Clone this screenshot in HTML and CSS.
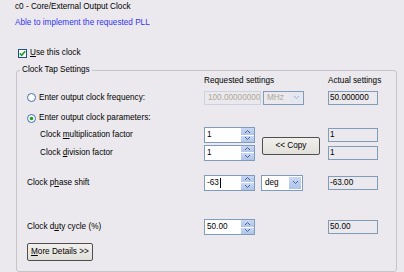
FILE: index.html
```html
<!DOCTYPE html>
<html lang="en">
<head>
    <meta charset="UTF-8">
    <title>Output Clock</title>
    <link rel="stylesheet" href="styles.css">
</head>
<body>
    <!-- Cabecera -->
    <div class="head">
        <p class="title">c0 - Core/External Output Clock</p>
        <p class="status">Able to implement the requested PLL</p>
        <div class="check">
            <svg width="9" height="9" viewBox="0 0 9 9"><rect x="0.5" y="0.5" width="8" height="8" fill="#fff" stroke="#1c5180"/><path d="M1.8 4.3 L3.7 6.3 L7.2 2.2" fill="none" stroke="#21a121" stroke-width="1.7"/></svg>
            <span><u>U</u>se this clock</span>
        </div>
    </div>

    <!-- Clock tap settings -->
    <fieldset class="tap">
        <legend>Clock Tap Settings</legend>
        <div class="grid">
            <span></span>
            <span class="colhead req">Requested settings</span>
            <span class="colhead">Actual settings</span>

            <div class="radio">
                <svg width="9" height="9" viewBox="0 0 9 9"><circle cx="4.5" cy="4.5" r="4" fill="#fff" stroke="#3c6fb0"/></svg>
                <span>Enter output clock frequency:</span>
            </div>
            <div class="freq">
                <span class="field disabled">100.00000000</span>
                <span class="combo small disabled">MHz<span class="drop"><svg width="7" height="5" viewBox="0 0 7 5"><path d="M1 1 L3.5 3.5 L6 1" fill="none" stroke="#a3afc4"/></svg></span></span>
            </div>
            <span class="actual">50.000000</span>

            <div class="radio span-row">
                <svg width="9" height="9" viewBox="0 0 9 9"><circle cx="4.5" cy="4.5" r="4" fill="#fff" stroke="#3c6fb0"/><circle cx="4.5" cy="4.5" r="1.8" fill="#21a121"/></svg>
                <span>Enter output clock parameters:</span>
            </div>

            <span class="label indent">Clock <u>m</u>ultiplication factor</span>
            <div class="spin"><span class="text">1</span><span class="arrows"><span><svg width="7" height="5" viewBox="0 0 7 5"><path d="M1 4 L3.5 1.5 L6 4" fill="none" stroke="#4d6185"/></svg></span><span><svg width="7" height="5" viewBox="0 0 7 5"><path d="M1 1 L3.5 3.5 L6 1" fill="none" stroke="#4d6185"/></svg></span></span></div>
            <button class="btn copy">&lt;&lt; Copy</button>
            <span class="actual">1</span>

            <span class="label indent">Clock <u>d</u>ivision factor</span>
            <div class="spin"><span class="text">1</span><span class="arrows"><span><svg width="7" height="5" viewBox="0 0 7 5"><path d="M1 4 L3.5 1.5 L6 4" fill="none" stroke="#4d6185"/></svg></span><span><svg width="7" height="5" viewBox="0 0 7 5"><path d="M1 1 L3.5 3.5 L6 1" fill="none" stroke="#4d6185"/></svg></span></span></div>
            <span class="actual">1</span>

            <span class="label">Clock p<u>h</u>ase shift</span>
            <div class="spin"><span class="text">-63<i class="caret"></i></span><span class="arrows"><span><svg width="7" height="5" viewBox="0 0 7 5"><path d="M1 4 L3.5 1.5 L6 4" fill="none" stroke="#4d6185"/></svg></span><span><svg width="7" height="5" viewBox="0 0 7 5"><path d="M1 1 L3.5 3.5 L6 1" fill="none" stroke="#4d6185"/></svg></span></span></div>
            <span class="combo deg">deg<span class="drop"><svg width="7" height="5" viewBox="0 0 7 5"><path d="M1 1 L3.5 3.5 L6 1" fill="none" stroke="#4d6185"/></svg></span></span>
            <span class="actual">-63.00</span>

            <span class="label duty">Clock d<u>u</u>ty cycle (%)</span>
            <div class="spin duty"><span class="text">50.00</span><span class="arrows"><span><svg width="7" height="5" viewBox="0 0 7 5"><path d="M1 4 L3.5 1.5 L6 4" fill="none" stroke="#4d6185"/></svg></span><span><svg width="7" height="5" viewBox="0 0 7 5"><path d="M1 1 L3.5 3.5 L6 1" fill="none" stroke="#4d6185"/></svg></span></span></div>
            <span class="actual duty last">50.00</span>
        </div>
        <button class="btn more"><u>M</u>ore Details &gt;&gt;</button>
    </fieldset>
</body>
</html>
```

FILE: styles.css
```css
/* Estilos generales */
body {
    margin: 0;
    background-color: #ebe9ed;
    font-family: "Liberation Sans", Arial, sans-serif;
    font-size: 8.2px;
    line-height: 10px;
    color: #000;
}

/* Cabecera */
.head {
    padding: 2px 0 0 15px;
}

.title {
    margin: 0;
}

.status {
    margin: 6px 0 0;
    color: #3434f0;
}

.check {
    display: flex;
    align-items: center;
    gap: 3px;
    margin: 20px 0 0 3px;
    height: 10px;
}

/* Group box */
.tap {
    margin: 7px 7px 0 16px;
    padding: 0 0 10px 3px;
    border: 1px solid #c6c4c9;
    border-radius: 3px;
    min-width: 0;
}

.tap legend {
    padding: 0 2px;
    line-height: 10px;
}

.grid {
    display: grid;
    margin-left: 7px;
    grid-template-columns: 177px 52px 72px 50px;
    grid-template-rows: 11px 23px 18px 16px 19px 41px 16px 16px;
    align-items: center;
}

.colhead {
    white-space: nowrap;
}

.colhead.req {
    grid-column: 2 / 4;
}

.radio {
    display: flex;
    align-items: center;
    gap: 3px;
    white-space: nowrap;
}

.radio.span-row {
    grid-column: 1 / -1;
}

.label {
    white-space: nowrap;
}

.indent {
    padding-left: 13px;
}

.freq {
    grid-column: 2 / 4;
    display: flex;
    gap: 2px;
}

/* Cajas de texto */
.field,
.actual {
    box-sizing: border-box;
    height: 14px;
    border: 1px solid #7f9db9;
    padding: 0 1px;
    line-height: 11px;
    white-space: nowrap;
    overflow: hidden;
}

.field {
    width: 57px;
    padding-left: 3px;
    line-height: 12px;
}

.disabled {
    color: #aca899;
    border-color: #c9d3e1;
}

.actual {
    width: 50px;
}

/* Spinner */
.spin {
    box-sizing: border-box;
    width: 51px;
    height: 16px;
    display: flex;
    border: 1px solid #7f9db9;
    background: #fff;
}

.spin .text {
    flex: 1;
    padding-left: 2px;
    line-height: 14px;
    display: flex;
    align-items: center;
}

.caret {
    display: inline-block;
    width: 1px;
    height: 10px;
    margin-left: 1px;
    background: #000;
}

.arrows {
    width: 13px;
    display: flex;
    flex-direction: column;
    gap: 1px;
    background: #fff;
}

.arrows span {
    flex: 1;
    display: flex;
    align-items: center;
    justify-content: center;
    background: linear-gradient(#c9d8f6, #aec4ea);
}

/* Combo */
.combo {
    box-sizing: border-box;
    display: flex;
    align-items: center;
    justify-content: space-between;
    width: 41px;
    border: 1px solid #7f9db9;
    background: #fff;
    padding-left: 3px;
}

.combo.small {
    height: 14px;
    background: transparent;
}

.combo.deg {
    height: 16px;
    margin-left: 5px;
    width: 42px;
}

.drop {
    width: 12px;
    align-self: stretch;
    margin: 1px;
    display: flex;
    align-items: center;
    justify-content: center;
    background: linear-gradient(#c9d8f6, #aec4ea);
}

.disabled .drop {
    background: #e3e7ef;
}

/* Botones */
.btn {
    box-sizing: border-box;
    font: inherit;
    color: #000;
    background: linear-gradient(#f1f0ec, #e2e0da);
    border: 1px solid #4f4f4f;
    border-radius: 2px;
    padding: 0;
}

.copy {
    grid-column: 3;
    grid-row: 4 / 6;
    width: 58px;
    height: 18px;
    margin: 2px 0 0 6px;
}

.duty {
    grid-row: 8;
}

.label.duty {
    grid-column: 1;
}

.spin.duty {
    grid-column: 2;
}

.actual.last {
    grid-column: 4;
}

.more {
    display: block;
    margin: 8px 0 0 7px;
    width: 66px;
    height: 18px;
    text-align: left;
    padding-left: 3px;
}
```
